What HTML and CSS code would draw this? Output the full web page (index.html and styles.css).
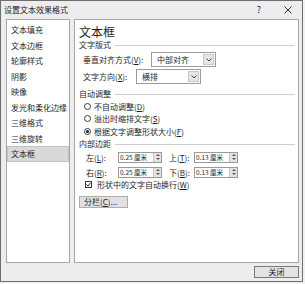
FILE: index.html
```html
<!DOCTYPE html>
<html lang="zh-CN">
<head>
<meta charset="utf-8">
<title>设置文本效果格式</title>
<link rel="stylesheet" href="styles.css">
</head>
<body>
<div class="dialog">
  <div class="titlebar">
    <span class="title">设置文本效果格式</span>
    <span class="help">?</span>
    <span class="close-x"><svg width="8" height="8" viewBox="0 0 8 8"><path d="M0.5 0.5 L7.5 7.5 M7.5 0.5 L0.5 7.5" stroke="#333" stroke-width="1" fill="none"/></svg></span>
  </div>
  <div class="body">
    <ul class="nav">
      <li>文本填充</li>
      <li>文本边框</li>
      <li>轮廓样式</li>
      <li>阴影</li>
      <li>映像</li>
      <li>发光和柔化边缘</li>
      <li>三维格式</li>
      <li>三维旋转</li>
      <li class="active">文本框</li>
    </ul>
    <div class="pane">
      <div class="pane-title">文本框</div>
      <div class="section"><span>文字版式</span><span class="rule"></span></div>
      <div class="field row-valign">
        <span class="label label-valign">垂直对齐方式(<u>V</u>):</span>
        <div class="select"><span class="select-text">中部对齐</span><span class="arrow"><svg width="6" height="4" viewBox="0 0 6 4"><path d="M0.5 0.5 L3 3 L5.5 0.5" stroke="#444" stroke-width="1" fill="none"/></svg></span></div>
      </div>
      <div class="field row-dir">
        <span class="label label-dir">文字方向(<u>X</u>):</span>
        <div class="select"><span class="select-text">横排</span><span class="arrow"><svg width="6" height="4" viewBox="0 0 6 4"><path d="M0.5 0.5 L3 3 L5.5 0.5" stroke="#444" stroke-width="1" fill="none"/></svg></span></div>
      </div>
      <div class="section section-auto"><span>自动调整</span><span class="rule"></span></div>
      <div class="radio-row"><span class="radio"></span><span>不自动调整(<u>D</u>)</span></div>
      <div class="radio-row"><span class="radio"></span><span>溢出时缩排文字(<u>S</u>)</span></div>
      <div class="radio-row"><span class="radio checked"></span><span>根据文字调整形状大小(<u>F</u>)</span></div>
      <div class="section section-margin"><span>内部边距</span><span class="rule"></span></div>
      <div class="spin-row first">
        <span class="spin-label">左(<u>L</u>):</span>
        <div class="spin"><span class="spin-text">0.25 厘米</span><span class="spin-btns"><span class="up"></span><span class="down"></span></span></div>
        <span class="spin-label second">上(<u>T</u>):</span>
        <div class="spin"><span class="spin-text">0.13 厘米</span><span class="spin-btns"><span class="up"></span><span class="down"></span></span></div>
      </div>
      <div class="spin-row">
        <span class="spin-label">右(<u>R</u>):</span>
        <div class="spin"><span class="spin-text">0.25 厘米</span><span class="spin-btns"><span class="up"></span><span class="down"></span></span></div>
        <span class="spin-label second">下(<u>B</u>):</span>
        <div class="spin"><span class="spin-text">0.13 厘米</span><span class="spin-btns"><span class="up"></span><span class="down"></span></span></div>
      </div>
      <div class="check-row"><span class="checkbox"><svg width="5" height="5" viewBox="0 0 5 5"><path d="M0.5 2.5 L2 4 L4.5 0.8" stroke="#222" stroke-width="1" fill="none"/></svg></span><span>形状中的文字自动换行(<u>W</u>)</span></div>
      <div class="btn-row"><span class="btn btn-cols">分栏(<u>C</u>)...</span></div>
    </div>
  </div>
  <div class="footer"><span class="btn btn-close">关闭</span></div>
</div>
</body>
</html>
```

FILE: styles.css
```css
html, body {
  margin: 0;
  padding: 0;
}
body {
  background: #f2f2f2;
  font-family: "Noto Sans CJK SC", "Noto Sans", sans-serif;
  font-size: 8px;
  color: #1e1e1e;
  width: 305px;
  height: 284px;
  overflow: hidden;
}
u {
  text-decoration: underline;
}
.dialog {
  width: 303px;
  height: 282px;
  box-sizing: border-box;
  border: 1px solid #6e6e6e;
  background: #ededed;
  display: flex;
  flex-direction: column;
}
.titlebar {
  height: 18px;
  display: flex;
  align-items: center;
  padding-left: 3px;
  line-height: 10px;
}
.title {
  flex: 1;
}
.help {
  width: 10px;
  text-align: center;
  font-size: 9px;
  margin-right: 19px;
}
.close-x {
  width: 10px;
  height: 8px;
  display: flex;
  justify-content: center;
  margin-right: 9px;
}
.body {
  display: flex;
  gap: 4px;
  padding: 0 3px 0 5px;
  height: 244px;
}
.nav {
  width: 64px;
  flex: none;
  box-sizing: border-box;
  border: 1px solid #a6a6a6;
  background: #fff;
  margin: 0;
  padding: 2px 0 0;
  list-style: none;
}
.nav li {
  height: 15.5px;
  line-height: 15.5px;
  padding-left: 4px;
  white-space: nowrap;
}
.nav li.active {
  background: #d9d9d9;
  box-shadow: inset 0 0 0 1px #c2c2c2;
}
.pane {
  flex: 1;
  box-sizing: border-box;
  border: 1px solid #a6a6a6;
  background: #fff;
  padding: 5px 3px 0 4px;
}
.pane-title {
  font-size: 12px;
  line-height: 14px;
  height: 14px;
}
.section {
  display: flex;
  align-items: center;
  height: 12px;
  line-height: 12px;
}
.rule {
  flex: 1;
  border-top: 1px solid #cfcfcf;
  margin-left: 4px;
}
.field {
  display: flex;
  align-items: center;
  height: 15px;
  padding-left: 4px;
}
.row-valign {
  margin-top: 1px;
}
.row-dir {
  margin-top: 2px;
}
.label-valign {
  width: 68px;
}
.label-dir {
  width: 53px;
}
.select {
  width: 65px;
  height: 15px;
  box-sizing: border-box;
  border: 1px solid #9c9c9c;
  background: #fff;
  display: flex;
  align-items: center;
}
.select-text {
  flex: 1;
  padding-left: 5px;
}
.arrow {
  width: 11px;
  height: 11px;
  margin-right: 1px;
  background: #e6e6e6;
  border: 1px solid #c8c8c8;
  box-sizing: border-box;
  display: flex;
  align-items: center;
  justify-content: center;
}
.section-auto {
  margin-top: 4px;
}
.radio-row {
  display: flex;
  align-items: center;
  height: 12.5px;
  padding-left: 5px;
}
.radio {
  width: 7px;
  height: 7px;
  box-sizing: border-box;
  border: 1px solid #3a3a3a;
  border-radius: 50%;
  margin-right: 3px;
  display: flex;
  align-items: center;
  justify-content: center;
  background: #fff;
}
.radio.checked::after {
  content: "";
  width: 3px;
  height: 3px;
  border-radius: 50%;
  background: #1a1a1a;
}
.section-margin {
  margin-top: 0.5px;
}
.spin-row {
  display: flex;
  align-items: center;
  height: 11px;
  padding-left: 7px;
  margin-top: 4px;
}
.spin-row.first {
  margin-top: 1.5px;
}
.spin-label {
  width: 32px;
  flex: none;
}
.spin-label.second {
  width: 25px;
  margin-left: 7px;
}
.spin {
  width: 44px;
  height: 11px;
  box-sizing: border-box;
  border: 1px solid #9a9a9a;
  background: #fff;
  display: flex;
  flex: none;
}
.spin-text {
  flex: 1;
  white-space: nowrap;
  font-size: 6.5px;
  line-height: 9px;
  padding-left: 1px;
}
.spin-btns {
  width: 7px;
  flex: none;
  display: flex;
  flex-direction: column;
  background: #e4e4e4;
  border-left: 1px solid #c4c4c4;
}
.spin-btns span {
  flex: 1;
  display: flex;
  align-items: center;
  justify-content: center;
}
.spin-btns .up::after {
  content: "";
  border-left: 2px solid transparent;
  border-right: 2px solid transparent;
  border-bottom: 2px solid #555;
}
.spin-btns .down::after {
  content: "";
  border-left: 2px solid transparent;
  border-right: 2px solid transparent;
  border-top: 2px solid #555;
}
.check-row {
  display: flex;
  align-items: center;
  height: 12px;
  padding-left: 6px;
  margin-top: 0.5px;
}
.checkbox {
  width: 7px;
  height: 7px;
  box-sizing: border-box;
  border: 1px solid #3a3a3a;
  background: #fff;
  margin-right: 5px;
  display: flex;
  align-items: center;
  justify-content: center;
}
.btn-row {
  margin-top: 6px;
  display: flex;
}
.btn {
  box-sizing: border-box;
  height: 12px;
  line-height: 10px;
  background: #e1e1e1;
  border: 1px solid #adadad;
  display: flex;
  align-items: center;
}
.btn-cols {
  width: 49px;
  padding-left: 4px;
}
.footer {
  display: flex;
  justify-content: flex-end;
  padding: 3px 3px 0 0;
}
.btn-close {
  width: 45px;
  justify-content: center;
  border-color: #7a7a7a;
  background: #e3e3e3;
}
```
